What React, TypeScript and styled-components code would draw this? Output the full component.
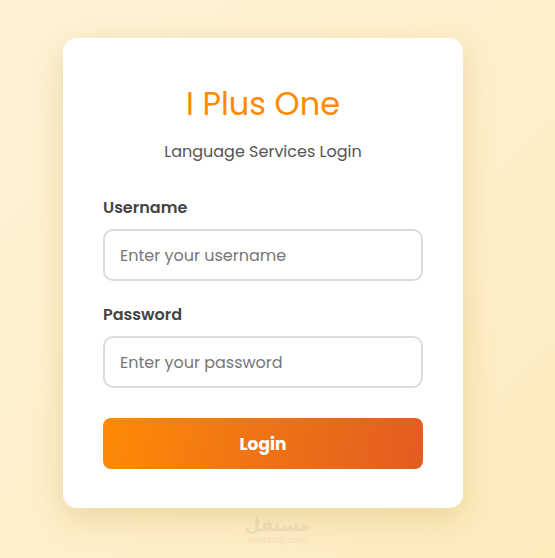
import React from 'react';
import styled, { createGlobalStyle } from 'styled-components';

const GlobalStyle = createGlobalStyle`
  html, body {
    margin: 0;
    padding: 0;
    height: 100%;
  }
  body {
    font-family: Poppins, 'Noto Sans', 'Open Sans', sans-serif;
    background: linear-gradient(135deg, #fdf2d6 0%, #feefc8 60%, #fdebbc 100%);
  }
  * {
    box-sizing: border-box;
  }
`;

const Page = styled.main`
  position: relative;
  width: 555px;
  height: 558px;
  padding: 38px 0 0 63px;
`;

const Card = styled.form`
  width: 400px;
  background: #fff;
  border-radius: 14px;
  padding: 42px 40px 39px;
  box-shadow: 0 10px 30px rgba(190, 150, 60, 0.28);
  display: flex;
  flex-direction: column;
`;

const Title = styled.h1`
  margin: 0;
  text-align: center;
  font-size: 32px;
  line-height: 48px;
  font-weight: 400;
  color: #ff8a00;
`;

const Subtitle = styled.p`
  margin: 12px 0 0;
  text-align: center;
  font-size: 16px;
  line-height: 24px;
  color: #555;
`;

const Field = styled.div<{ $top: number }>`
  display: flex;
  flex-direction: column;
  gap: 9px;
  margin-top: ${({ $top }) => $top}px;
`;

const Label = styled.label`
  font-size: 16px;
  line-height: 24px;
  font-weight: 600;
  color: #444;
`;

const Input = styled.input`
  height: 52px;
  width: 100%;
  border: 2px solid #dcdcdc;
  border-radius: 10px;
  padding: 0 15px;
  font-family: inherit;
  font-size: 16px;
  color: #333;
  outline: none;
  &::placeholder {
    color: #777;
  }
`;

const Button = styled.button`
  margin-top: 30px;
  height: 51px;
  width: 100%;
  border: none;
  border-radius: 8px;
  background: linear-gradient(100deg, #ff8a05 0%, #f07515 45%, #e35c20 100%);
  color: #fff;
  font-family: inherit;
  font-size: 17px;
  font-weight: 700;
  cursor: pointer;
`;

const Watermark = styled.div`
  position: absolute;
  left: 0;
  right: 0;
  top: 515px;
  display: flex;
  flex-direction: column;
  align-items: center;
  font-family: 'DejaVu Sans', sans-serif;
  color: rgba(160, 150, 130, 0.18);
  pointer-events: none;
`;

const WatermarkArabic = styled.span`
  font-size: 18px;
  font-weight: 700;
  line-height: 20px;
`;

const WatermarkLatin = styled.span`
  font-size: 9px;
  line-height: 10px;
`;

export default function App() {
  return (
    <>
      <GlobalStyle />
      <Page>
        <Card onSubmit={(e) => e.preventDefault()}>
          <Title>I Plus One</Title>
          <Subtitle>Language Services Login</Subtitle>
          <Field $top={32}>
            <Label htmlFor="username">Username</Label>
            <Input id="username" type="text" placeholder="Enter your username" />
          </Field>
          <Field $top={22}>
            <Label htmlFor="password">Password</Label>
            <Input id="password" type="password" placeholder="Enter your password" />
          </Field>
          <Button type="submit">Login</Button>
        </Card>
        <Watermark>
          <WatermarkArabic>مستقل</WatermarkArabic>
          <WatermarkLatin>mostaql.com</WatermarkLatin>
        </Watermark>
      </Page>
    </>
  );
}
